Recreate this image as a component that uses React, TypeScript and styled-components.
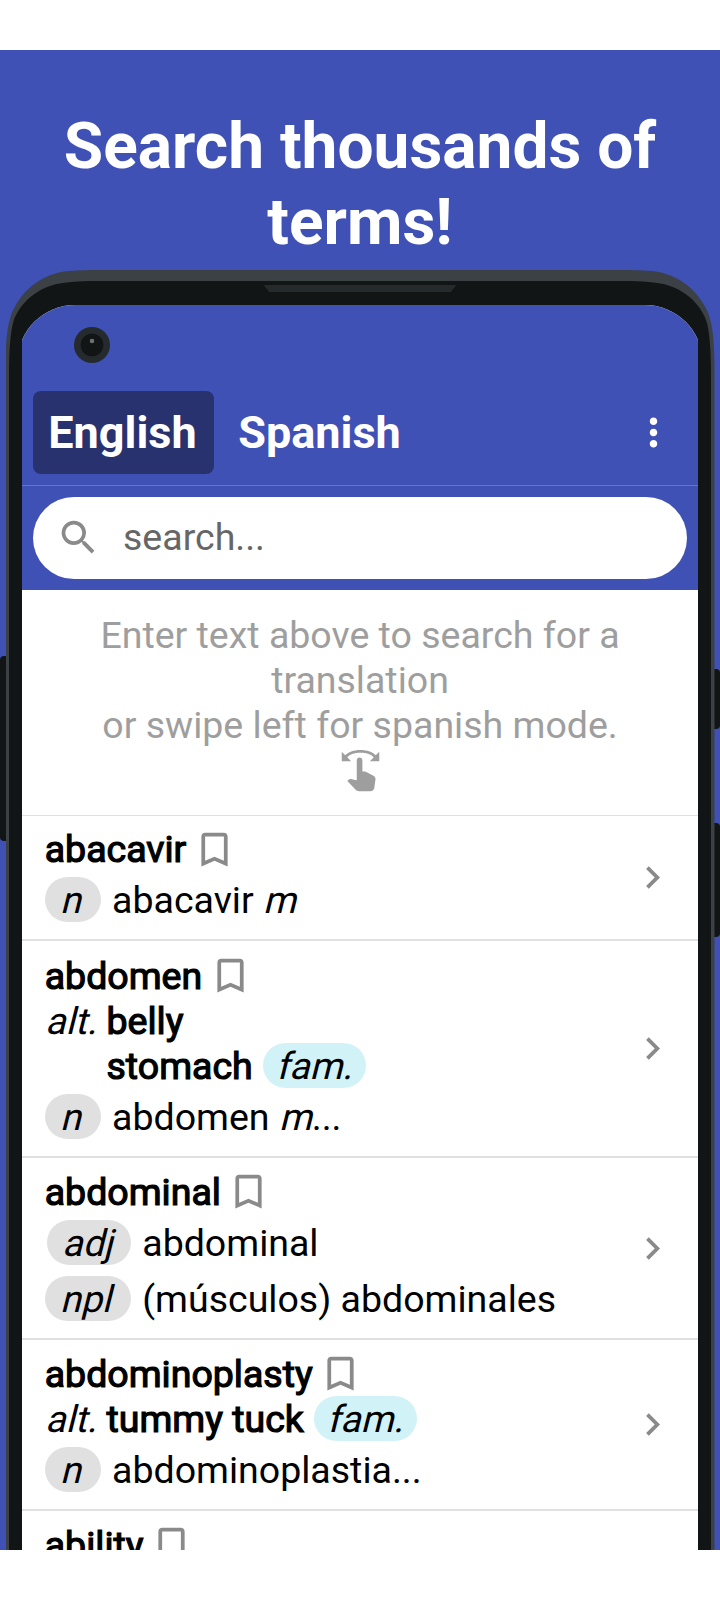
import React from "react";
import styled, { createGlobalStyle } from "styled-components";
import {
  MdBookmarkBorder,
  MdChevronRight,
  MdMoreVert,
  MdSearch,
  MdSwipe,
} from "react-icons/md";

const GlobalStyle = createGlobalStyle`
  * { box-sizing: border-box; }
  body {
    margin: 0;
    background: #fff;
    font-family: Roboto, "Liberation Sans", sans-serif;
  }
`;

const Page = styled.div`
  width: 720px;
  height: 1600px;
  padding: 50px 0;
  background: #fff;
  overflow: hidden;
`;

const Stage = styled.main`
  position: relative;
  height: 1500px;
  background: #3f51b5;
  overflow: hidden;
`;

const Headline = styled.h1`
  margin: 0;
  height: 220px;
  padding: 59px 40px 0;
  color: #fff;
  font-size: 64px;
  line-height: 76px;
  font-weight: 700;
  text-align: center;
`;

const SideKey = styled.div<{ $side: "left" | "right"; $top: number; $height: number }>`
  position: absolute;
  ${(p) => p.$side}: 0;
  top: ${(p) => p.$top}px;
  width: 6px;
  height: ${(p) => p.$height}px;
  background: #111516;
  border-radius: ${(p) => (p.$side === "left" ? "4px 0 0 4px" : "0 4px 4px 0")};
`;

const Phone = styled.section`
  position: relative;
  width: 709px;
  height: 1400px;
  margin: 0 auto;
  padding: 11px 3.5px 0;
  background: #3b4144;
  clip-path: path("M0 1400V100C0 70 2 50 9 37.5C20 17 38 4 62 1C75 0 85 0 94 0H615C624 0 634 0 647 1C671 4 689 17 700 37.5C707 50 709 70 709 100V1400Z");
`;

const Bezel = styled.div`
  height: 100%;
  padding: 24px 13px 0;
  background: #111516;
  clip-path: path("M0 1400V95C0 72 1 53 4.3 41C9 25 27 4 57.6 1.5C68 0 78 0 88 0H614C624 0 634 0 644.4 1.5C675 4 693 25 697.7 41C701 53 702 72 702 95V1400Z");
`;

const Speaker = styled.div`
  position: absolute;
  top: 15px;
  left: 258px;
  width: 193px;
  height: 7px;
  background: #252a2c;
  clip-path: polygon(0 0, 100% 0, 97% 100%, 3% 100%);
`;

const Screen = styled.div`
  height: 100%;
  background: #fff;
  clip-path: inset(0 -4.5px -100px -4.5px round 57.5px);
`;

const AppHeader = styled.header`
  height: 285px;
  padding-top: 75px;
  background: #3f51b5;
`;

const Camera = styled.div`
  position: absolute;
  left: 68.5px;
  top: 57px;
  width: 36px;
  height: 36px;
  border-radius: 50%;
  background: radial-gradient(circle at 18px 14px, #68726f 2px, transparent 2.6px),
    radial-gradient(circle at 18px 18px, #111516 11px, #252a2c 11.8px);
`;

const TabBar = styled.nav`
  display: flex;
  align-items: center;
  height: 106px;
  padding: 0 22.3px 0 11.3px;
  border-bottom: 1px solid #6673c4;
`;

const Tab = styled.button<{ $active?: boolean }>`
  height: 83px;
  padding: 0 17px 0 15px;
  margin-right: 9.5px;
  border: 0;
  border-radius: 8px;
  background: ${(p) => (p.$active ? "#27326f" : "transparent")};
  color: #fff;
  font: 700 45px / 54px Roboto, sans-serif;
`;

const MenuIcon = styled(MdMoreVert)`
  margin-left: auto;
  color: #fff;
`;

const SearchRow = styled.div`
  padding: 10.5px 11px 11px;
`;

const SearchBox = styled.label`
  display: flex;
  align-items: center;
  height: 82.5px;
  padding-left: 22.5px;
  border-radius: 42px;
  background: #fff;
  color: #8a8a8a;
`;

const SearchText = styled.span`
  margin-left: 22.5px;
  color: #666;
  font-size: 37.5px;
  line-height: 45px;
`;

const Intro = styled.div`
  display: flex;
  flex-direction: column;
  align-items: center;
  height: 226px;
  padding: 23px 60px 0;
  border-bottom: 1px solid #e0e0e0;
  color: #9e9e9e;
  font-size: 37.5px;
  line-height: 45px;
  text-align: center;
`;

const EntryRow = styled.article`
  display: flex;
  align-items: center;
  padding: 0 23px 0 22.7px;
  border-bottom: 2px solid #e0e0e0;
  color: #000;
  font-size: 37.5px;
  line-height: 47px;
`;

const EntryBody = styled.div<{ $padTop: number }>`
  flex: 1;
  padding: ${(p) => p.$padTop}px 0 17px;
`;

const Line = styled.div<{ $leading?: number }>`
  display: flex;
  height: 45px;
  line-height: ${(p) => p.$leading ?? 47}px;
  white-space: pre;
`;

const Term = styled.span`
  -webkit-text-stroke: 1.2px #000;
`;

const Bookmark = styled(MdBookmarkBorder)`
  margin-left: 5.5px;
  color: #8a8a8a;
`;

/* Upright letters slanted about their baseline. */
const Slanted = styled.span`
  display: inline-block;
  transform: skewX(-14deg);
  transform-origin: 0 36px;
`;

const AltLabel = styled.span`
  width: 61.8px;
`;

const FamPill = styled.span`
  height: 45px;
  margin-left: 10.5px;
  padding: 0 14px 0 12.5px;
  border-radius: 22.5px;
  background: #d1f2f7;
`;

const SenseTable = styled.div<{ $gap: number }>`
  display: grid;
  grid-template-columns: max-content 1fr;
  column-gap: 11.3px;
  row-gap: 11px;
  margin-top: ${(p) => p.$gap}px;
`;

const ClassPill = styled.span<{ $padEnd: number }>`
  justify-self: end;
  height: 45px;
  padding: 0 ${(p) => p.$padEnd}px 0 15px;
  border-radius: 22.5px;
  background: #e0e0e0;
`;

const SenseText = styled.span`
  height: 45px;
`;

const Chevron = styled(MdChevronRight)`
  color: #8a8a8a;
`;

interface Entry {
  term: string;
  alts?: { text: string; familiar?: boolean }[];
  senses: { kind: string; text: React.ReactNode; padEnd?: number }[];
  padTop?: number;
  gap?: number;
  leading?: number;
}

const entries: Entry[] = [
  {
    term: "abacavir",
    senses: [{ kind: "n", text: <>abacavir <Slanted>m</Slanted></> }],
    gap: 5,
    leading: 45,
  },
  {
    term: "abdomen",
    alts: [{ text: "belly" }, { text: "stomach", familiar: true }],
    senses: [{ kind: "n", text: <>abdomen <Slanted>m</Slanted>...</> }],
    padTop: 12,
  },
  {
    term: "abdominal",
    senses: [
      { kind: "adj", text: "abdominal", padEnd: 18.7 },
      { kind: "npl", text: "(músculos) abdominales" },
    ],
  },
  {
    term: "abdominoplasty",
    alts: [{ text: "tummy tuck", familiar: true }],
    senses: [{ kind: "n", text: "abdominoplastia..." }],
  },
  { term: "ability", senses: [] },
];

function EntryItem({ term, alts = [], senses, padTop = 11, gap = 6, leading }: Entry) {
  return (
    <EntryRow>
      <EntryBody $padTop={padTop}>
        <Line $leading={leading}>
          <Term>{term}</Term>
          <Bookmark size={45} />
        </Line>
        {alts.map((alt, i) => (
          <Line key={alt.text}>
            <AltLabel>{i === 0 && <Slanted>alt.</Slanted>}</AltLabel>
            <Term>{alt.text}</Term>
            {alt.familiar && (
              <FamPill>
                <Slanted>fam.</Slanted>
              </FamPill>
            )}
          </Line>
        ))}
        <SenseTable $gap={gap}>
          {senses.map((s) => (
            <React.Fragment key={s.kind}>
              <ClassPill $padEnd={s.padEnd ?? 20.4}>
                <Slanted>{s.kind}</Slanted>
              </ClassPill>
              <SenseText>{s.text}</SenseText>
            </React.Fragment>
          ))}
        </SenseTable>
      </EntryBody>
      {senses.length > 0 && <Chevron size={45} />}
    </EntryRow>
  );
}

export default function App() {
  return (
    <Page>
      <GlobalStyle />
      <Stage>
        <Headline>
          Search thousands of
          <br />
          terms!
        </Headline>
        <SideKey $side="left" $top={606} $height={185} />
        <SideKey $side="right" $top={618.5} $height={60.5} />
        <SideKey $side="right" $top={773} $height={114} />
        <Phone>
          <Bezel>
            <Screen>
              <AppHeader>
                <TabBar>
                  <Tab $active>English</Tab>
                  <Tab>Spanish</Tab>
                  <MenuIcon size={45} />
                </TabBar>
                <SearchRow>
                  <SearchBox>
                    <MdSearch size={45} />
                    <SearchText>search...</SearchText>
                  </SearchBox>
                </SearchRow>
              </AppHeader>
              <Intro>
                <span>Enter text above to search for a</span>
                <span>translation</span>
                <span>or swipe left for spanish mode.</span>
                <MdSwipe size={45} />
              </Intro>
              {entries.map((e) => (
                <EntryItem key={e.term} {...e} />
              ))}
            </Screen>
          </Bezel>
          <Speaker />
          <Camera />
        </Phone>
      </Stage>
    </Page>
  );
}
